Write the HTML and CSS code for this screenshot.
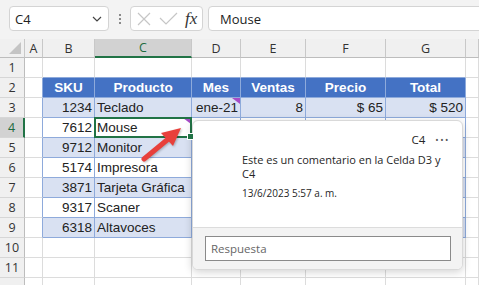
FILE: index.html
```html
<!DOCTYPE html>
<html lang="es">
<head>
    <meta charset="UTF-8">
    <title>Comentario en celda</title>
    <link rel="stylesheet" href="styles.css">
</head>
<body>

    <div class="formula-bar">
        <div class="name-box">
            <span>C4</span>
            <svg width="10" height="6" viewBox="0 0 10 6"><path d="M1 1 L5 5 L9 1" fill="none" stroke="#444" stroke-width="1.2"/></svg>
        </div>
        <div class="grip"><i></i><i></i><i></i></div>
        <div class="fx-box">
            <svg width="14" height="14" viewBox="0 0 14 14"><path d="M1 1 L13 13 M13 1 L1 13" stroke="#c6c6c6" stroke-width="1.2"/></svg>
            <svg width="19" height="13" viewBox="0 0 19 13"><path d="M1 6 L7 12 L18 1" fill="none" stroke="#c6c6c6" stroke-width="1.2"/></svg>
            <span class="fx">fx</span>
        </div>
        <div class="formula-input">Mouse</div>
    </div>

    <div class="sheet">
        <div class="hd corner"></div>
        <div class="hd">A</div>
        <div class="hd">B</div>
        <div class="hd hd-sel">C</div>
        <div class="hd">D</div>
        <div class="hd">E</div>
        <div class="hd">F</div>
        <div class="hd">G</div>
        <div class="hd"></div>

        <div class="rh">1</div>
        <div class="c"></div>
        <div class="c tt"></div><div class="c tt"></div><div class="c tt"></div><div class="c tt"></div><div class="c tt"></div><div class="c tt"></div>
        <div class="c"></div>

        <div class="rh">2</div>
        <div class="c tl"></div>
        <div class="c th">SKU</div>
        <div class="c th">Producto</div>
        <div class="c th">Mes</div>
        <div class="c th">Ventas</div>
        <div class="c th">Precio</div>
        <div class="c th">Total</div>
        <div class="c"></div>

        <div class="rh">3</div>
        <div class="c tl"></div>
        <div class="c tb band num">1234</div>
        <div class="c tb band">Teclado</div>
        <div class="c tb band num">ene-21<span class="note"></span></div>
        <div class="c tb band num">8</div>
        <div class="c tb band num">$ 65</div>
        <div class="c tb band num">$ 520</div>
        <div class="c"></div>

        <div class="rh rh-sel">4</div>
        <div class="c tl"></div>
        <div class="c tb num">7612</div>
        <div class="c tb sel">Mouse<span class="note"></span></div>
        <div class="c tb"></div><div class="c tb"></div><div class="c tb"></div><div class="c tb"></div>
        <div class="c"></div>

        <div class="rh">5</div>
        <div class="c tl"></div>
        <div class="c tb band num">9712</div>
        <div class="c tb band">Monitor</div>
        <div class="c tb band"></div><div class="c tb band"></div><div class="c tb band"></div><div class="c tb band"></div>
        <div class="c"></div>

        <div class="rh">6</div>
        <div class="c tl"></div>
        <div class="c tb num">5174</div>
        <div class="c tb">Impresora</div>
        <div class="c tb"></div><div class="c tb"></div><div class="c tb"></div><div class="c tb"></div>
        <div class="c"></div>

        <div class="rh">7</div>
        <div class="c tl"></div>
        <div class="c tb band num">3871</div>
        <div class="c tb band">Tarjeta Gráfica</div>
        <div class="c tb band"></div><div class="c tb band"></div><div class="c tb band"></div><div class="c tb band"></div>
        <div class="c"></div>

        <div class="rh">8</div>
        <div class="c tl"></div>
        <div class="c tb num">9317</div>
        <div class="c tb">Scaner</div>
        <div class="c tb"></div><div class="c tb"></div><div class="c tb"></div><div class="c tb"></div>
        <div class="c"></div>

        <div class="rh">9</div>
        <div class="c tl"></div>
        <div class="c tb band num">6318</div>
        <div class="c tb band">Altavoces</div>
        <div class="c tb band"></div><div class="c tb band"></div><div class="c tb band"></div><div class="c tb band"></div>
        <div class="c"></div>

        <div class="rh">10</div>
        <div class="c"></div><div class="c"></div><div class="c"></div><div class="c"></div><div class="c"></div><div class="c"></div><div class="c"></div><div class="c"></div>

        <div class="rh">11</div>
        <div class="c"></div><div class="c"></div><div class="c"></div><div class="c"></div><div class="c"></div><div class="c"></div><div class="c"></div><div class="c"></div>

        <!-- row 12 only peeks in at the bottom edge -->
        <div class="rh"></div>
        <div class="c"></div><div class="c"></div><div class="c"></div><div class="c"></div><div class="c"></div><div class="c"></div><div class="c"></div><div class="c"></div>
    </div>

    <!-- arrow pointing at the comment mark -->
    <svg class="arrow" width="60" height="50" viewBox="130 120 60 50">
        <line x1="144" y1="159" x2="167" y2="140" stroke="#e8403b" stroke-width="5" stroke-linecap="round"/>
        <polygon points="181,128 173,146 161,133" fill="#e8403b"/>
    </svg>

    <div class="comment">
        <div class="comment-body">
            <div class="comment-head">
                <span>C4</span>
                <span class="more">•••</span>
            </div>
            <p class="comment-text">Este es un comentario en la Celda D3 y C4</p>
            <p class="comment-date">13/6/2023 5:57 a. m.</p>
        </div>
        <div class="comment-foot">
            <div class="reply">Respuesta</div>
        </div>
    </div>

</body>
</html>
```

FILE: styles.css
```css
body {
    margin: 0;
    width: 479px;
    height: 285px;
    overflow: hidden;
    position: relative;
    background-color: #fff;
    font-family: 'Open Sans', 'Noto Sans', sans-serif;
    color: #222;
}

/* formula bar */
.formula-bar {
    height: 39px;
    background-color: #f3f3f3;
    display: flex;
    align-items: flex-start;
    padding: 6px 0 0 9px;
    box-sizing: border-box;
}
.name-box, .fx-box, .formula-input {
    height: 25px;
    background-color: #fff;
    border: 1px solid #d4d4d4;
    border-radius: 4px;
    box-sizing: border-box;
    display: flex;
    align-items: center;
}
.name-box {
    width: 100px;
    justify-content: space-between;
    padding: 0 6px 0 5px;
    font-size: 13px;
}
.grip {
    width: 21px;
    height: 25px;
    display: flex;
    flex-direction: column;
    align-items: center;
    justify-content: center;
    gap: 2px;
}
.grip i {
    width: 2px;
    height: 2px;
    background-color: #8a8a8a;
}
.fx-box {
    width: 73px;
    padding-left: 6px;
    gap: 8px;
}
.fx {
    font-family: 'Liberation Serif', serif;
    font-style: italic;
    font-size: 17px;
    color: #333;
    margin-left: -1px;
}
.formula-input {
    flex: 1;
    margin-left: 5px;
    margin-right: -10px;
    padding-left: 11px;
    font-size: 13px;
}

/* grid */
.sheet {
    display: grid;
    grid-template-columns: 25px 18px 52px 97px 49px 65px 80px 80px 1fr;
    grid-template-rows: 19px repeat(12, 20px);
    font-family: 'Liberation Sans', Arial, sans-serif;
    font-size: 13.5px;
}
.hd, .rh {
    background-color: #f0f0f0;
    color: #333;
    font-family: 'Open Sans', sans-serif;
    font-size: 12.5px;
    display: flex;
    align-items: center;
    justify-content: center;
    box-sizing: border-box;
}
.hd {
    border-right: 1px solid #c8c8c8;
    border-bottom: 1px solid #bdbdbd;
}
.rh {
    border-right: 1px solid #bdbdbd;
    border-bottom: 1px solid #d6d6d6;
}
.corner {
    position: relative;
}
.corner::after {
    content: '';
    position: absolute;
    right: 3px;
    bottom: 3px;
    border-left: 12px solid transparent;
    border-bottom: 12px solid #c4c4c4;
}
.hd-sel {
    background-color: #d2d2d2;
    color: #1d6b3f;
    border-bottom: 2px solid #217346;
}
.rh-sel {
    background-color: #d2d2d2;
    color: #1d6b3f;
    border-right: 2px solid #217346;
}
.c {
    border-right: 1px solid #dcdcdc;
    border-bottom: 1px solid #dcdcdc;
    box-sizing: border-box;
    padding: 0 2px;
    display: flex;
    align-items: center;
    white-space: nowrap;
    position: relative;
}
.tl {
    border-right-color: #8eaadb;
}
.tt {
    border-bottom-color: #8eaadb;
}
.th {
    background-color: #4472c4;
    color: #fff;
    font-weight: bold;
    justify-content: center;
    border-right-color: #8eaadb;
    border-bottom-color: #8eaadb;
}
.tb {
    border-right-color: #8eaadb;
    border-bottom-color: #8eaadb;
}
.band {
    background-color: #d9e1f2;
}
.num {
    justify-content: flex-end;
}
.note {
    position: absolute;
    top: 0;
    right: 0;
    border-left: 8px solid transparent;
    border-top: 6px solid #a64bc7;
}
.sel::after {
    content: '';
    position: absolute;
    left: -1px;
    top: -1px;
    right: -1px;
    bottom: -1px;
    border: 2px solid #217346;
}
.sel::before {
    content: '';
    position: absolute;
    right: -3px;
    bottom: -3px;
    width: 5px;
    height: 5px;
    background-color: #217346;
    border: 1px solid #fff;
    z-index: 1;
}

.arrow {
    position: absolute;
    left: 130px;
    top: 120px;
    filter: drop-shadow(1px 1px 1px rgba(0, 0, 0, 0.25));
}

/* comment card */
.comment {
    position: absolute;
    left: 192px;
    top: 120px;
    width: 271px;
    height: 150px;
    background-color: #fff;
    border: 1px solid #d9d9d9;
    border-radius: 6px;
    box-shadow: 0 2px 8px rgba(0, 0, 0, 0.18);
    box-sizing: border-box;
    display: flex;
    flex-direction: column;
    overflow: hidden;
    font-size: 11px;
    color: #262626;
}
.comment-body {
    flex: 1;
    padding: 12px 12px 0 49px;
}
.comment-head {
    display: flex;
    justify-content: flex-end;
    align-items: center;
    gap: 10px;
    line-height: 14px;
    font-size: 11.5px;
}
.more {
    font-size: 9px;
    letter-spacing: 1.5px;
    color: #555;
}
.comment-text {
    margin: 6px 0 0;
    line-height: 14px;
}
.comment-date {
    margin: 5px 0 0;
    line-height: 14px;
    font-size: 10px;
}
.comment-foot {
    height: 42px;
    background-color: #f3f3f3;
    border-top: 1px solid #dcdcdc;
    padding: 8px 0 0 12px;
    box-sizing: border-box;
}
.reply {
    width: 246px;
    height: 25px;
    background-color: #fff;
    border: 1px solid #8a8a8a;
    box-sizing: border-box;
    padding-left: 5px;
    display: flex;
    align-items: center;
    font-size: 11.5px;
    color: #666;
}
```
